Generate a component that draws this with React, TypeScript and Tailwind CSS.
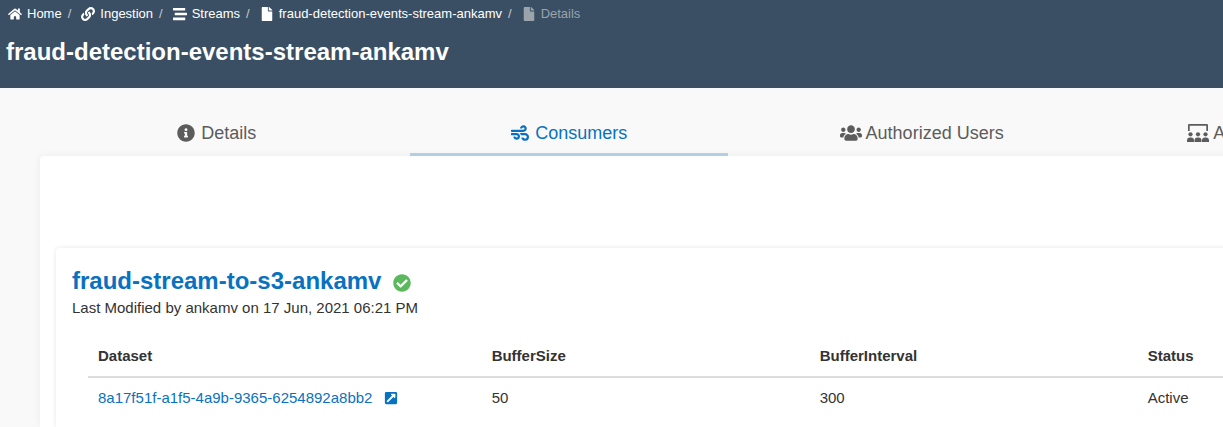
import React from "react";
import {
  FaCheckCircle,
  FaExternalLinkSquareAlt,
  FaFile,
  FaHome,
  FaInfoCircle,
  FaLink,
  FaStream,
  FaUsers,
  FaWind,
} from "react-icons/fa";

interface Crumb {
  id: number;
  title: string;
  icon: React.ReactNode;
}

const STREAM_NAME = "fraud-detection-events-stream-ankamv";

const crumbs: Crumb[] = [
  { id: 1, title: "Home", icon: <FaHome className="size-[14px]" /> },
  { id: 2, title: "Ingestion", icon: <FaLink className="size-[14px]" /> },
  { id: 3, title: "Streams", icon: <FaStream className="size-[14px]" /> },
  { id: 4, title: STREAM_NAME, icon: <FaFile className="size-[14px]" /> },
];

const ScreenUsersIcon = () => (
  <svg viewBox="0 0 22 18" className="h-[18px] w-[22px]" fill="currentColor">
    <path d="M1 1.200A1.200 1.200 0 0 1 2.200 0h17.600A1.200 1.200 0 0 1 21 1.200V7h-1.700V1.800H2.700V7H1z" />
    <circle cx="3.500" cy="10.300" r="2.100" />
    <circle cx="11" cy="10.300" r="2.100" />
    <circle cx="18.500" cy="10.300" r="2.100" />
    <path d="M0 18v-1.600a3 3 0 0 1 3-3h1a3 3 0 0 1 3 3V18zM7.500 18v-1.600a3 3 0 0 1 3-3h1a3 3 0 0 1 3 3V18zM15 18v-1.600a3 3 0 0 1 3-3h1a3 3 0 0 1 3 3V18z" />
  </svg>
);

const tabs = [
  {
    id: "details",
    title: "Details",
    icon: <FaInfoCircle className="size-[18px]" />,
    layout: "justify-center gap-1.5",
  },
  {
    id: "consumers",
    title: "Consumers",
    icon: <FaWind className="size-[18px]" />,
    layout: "justify-center gap-1.5",
  },
  {
    id: "users",
    title: "Authorized Users",
    icon: <FaUsers className="h-[18px] w-[22px]" />,
    layout: "justify-center gap-1",
  },
  {
    id: "a",
    title: "A",
    icon: <ScreenUsersIcon />,
    layout: "justify-start gap-1 pl-[72px]",
  },
];

const Header = () => (
  <header className="h-[88px] shrink-0 bg-[#3a4f63] text-white">
    <nav aria-label="Breadcrumb" className="pt-1 pl-2">
      <ol className="flex h-5 items-center text-[13px]">
        {crumbs.map((crumb) => (
          <li key={crumb.id} className="flex items-center">
            <a href="#" className="flex items-center gap-[5px]">
              {crumb.icon}
              {crumb.title}
            </a>
            <span className="mr-2.5 ml-1.5 text-[#c3c9cf]">/</span>
          </li>
        ))}
        <li className="flex items-center gap-[5px] text-[#9ba3ab]" aria-current="page">
          <FaFile className="size-[14px]" />
          Details
        </li>
      </ol>
    </nav>
    <h1 className="mt-3 pl-1.5 text-2xl leading-8 font-bold">{STREAM_NAME}</h1>
  </header>
);

const Tabs = () => (
  <div role="tablist" className="ml-[58px] flex shrink-0 gap-[35px] overflow-hidden pt-6">
    {tabs.map((tab) => {
      const isActive = tab.id === "consumers";

      return (
        <button
          key={tab.id}
          role="tab"
          aria-selected={isActive}
          className={`flex h-11 w-[27.25%] shrink-0 items-center border-b-3 text-lg ${
            tab.layout
          } ${
            isActive
              ? "border-[#b5d4e6] text-[#0972c0]"
              : "border-transparent text-[#5c5c5c]"
          }`}
        >
          {tab.icon}
          {tab.title}
        </button>
      );
    })}
  </div>
);

const ConsumerCard = () => (
  <section className="flex-1 rounded-t bg-white px-4 pt-[17px] text-[15px] shadow-[0_0_5px_rgba(0,0,0,0.1)]">
    <h2 className="flex items-center gap-3 text-2xl leading-8 font-bold text-[#0972c0]">
      <a href="#">fraud-stream-to-s3-ankamv</a>
      <FaCheckCircle className="mt-1 size-[18px] text-[#5cb85c]" />
    </h2>
    <p className="leading-[22px]">Last Modified by ankamv on 17 Jun, 2021 06:21 PM</p>

    <table className="mt-[18px] ml-4 w-[114%] table-fixed border-collapse text-left">
      <colgroup>
        <col className="w-[30%]" />
        <col className="w-1/4" />
        <col className="w-1/4" />
        <col />
      </colgroup>
      <thead>
        <tr className="h-10 border-b-2 border-[#dddddd]">
          <th className="px-2.5">Dataset</th>
          <th className="px-2.5">BufferSize</th>
          <th className="px-2.5">BufferInterval</th>
          <th className="px-2.5">Status</th>
        </tr>
      </thead>
      <tbody>
        <tr className="h-[42px]">
          <td className="px-2.5">
            <a href="#" className="flex items-center gap-3 text-[#0972c0]">
              8a17f51f-a1f5-4a9b-9365-6254892a8bb2
              <FaExternalLinkSquareAlt className="mb-0.5 size-[14px]" />
            </a>
          </td>
          <td className="px-2.5">50</td>
          <td className="px-2.5">300</td>
          <td className="px-2.5">Active</td>
        </tr>
      </tbody>
    </table>
  </section>
);

const App = () => {
  return (
    <div className="flex min-h-screen flex-col overflow-hidden bg-[#f9f9f9] font-['Liberation_Sans',Arial,sans-serif] text-[#333333]">
      <Header />
      <Tabs />
      <main className="-mr-4 ml-10 flex flex-1 flex-col rounded-t bg-white pt-[92px] pl-4 shadow-[0_0_8px_rgba(0,0,0,0.06)]">
        <ConsumerCard />
      </main>
    </div>
  );
};

export default App;
